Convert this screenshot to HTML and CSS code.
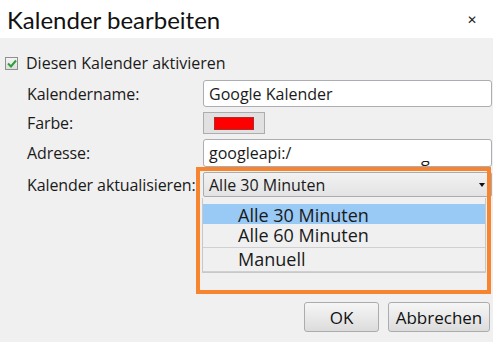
FILE: index.html
```html
<!DOCTYPE html>
<html lang="de">
<head>
    <meta charset="UTF-8">
    <title>Kalender bearbeiten</title>
    <link rel="stylesheet" href="styles.css">
</head>
<body>
    <div class="dialog">
        <div class="titlebar">
            <span class="title">Kalender bearbeiten</span>
            <span class="close">&#x2715;</span>
        </div>

        <div class="content">
            <label class="enable">
                <span class="checkbox">
                    <svg width="10" height="9" viewBox="0 0 10 9"><path d="M1 4.5 L4 7.5 L9 1.5" fill="none" stroke="#2e9e3a" stroke-width="2"/></svg>
                </span>
                Diesen Kalender aktivieren
            </label>

            <div class="form">
                <span class="label">Kalendername:</span>
                <div class="field text">Google Kalender</div>

                <span class="label">Farbe:</span>
                <div class="field"><span class="color-btn"><span class="swatch"></span></span></div>

                <span class="label">Adresse:</span>
                <div class="field text address">googleapi:/<span class="clipped"><span>g</span></span></div>

                <span class="label">Kalender aktualisieren:</span>
                <div class="field select-wrap">
                    <div class="select">
                        <span>Alle 30 Minuten</span>
                        <span class="arrow"></span>
                    </div>
                    <!-- open dropdown list -->
                    <ul class="options">
                        <li class="selected">Alle 30 Minuten</li>
                        <li>Alle 60 Minuten</li>
                        <li>Manuell</li>
                    </ul>
                </div>
            </div>

            <div class="highlight"></div>

            <div class="buttons">
                <button class="btn ok">OK</button>
                <button class="btn cancel">Abbrechen</button>
            </div>
        </div>
    </div>
</body>
</html>
```

FILE: styles.css
```css
/* General */
body {
    margin: 0;
    font-family: "Open Sans", "Noto Sans", sans-serif;
    color: #1a1a1a;
    background: #f0f0f0;
}

.dialog {
    width: 493px;
    height: 342px;
    background: #f0f0f0;
    position: relative;
    overflow: hidden;
}

/* Title bar */
.titlebar {
    height: 38px;
    background: #fff;
    display: flex;
    align-items: center;
    justify-content: space-between;
    padding: 0 16px 0 7px;
}

.title {
    font-family: "Lato", "Open Sans", sans-serif;
    font-size: 24px;
    color: #111;
}

.close {
    font-size: 12px;
    color: #222;
}

/* Content */
.content {
    padding: 17px 0 0 0;
}

.enable {
    display: flex;
    align-items: center;
    gap: 8px;
    padding-left: 5px;
    font-size: 16px;
    height: 16px;
}

.checkbox {
    width: 11px;
    height: 11px;
    border: 1px solid #8f8f8f;
    background: linear-gradient(#f4f4f4, #dedede);
    display: flex;
    align-items: center;
    justify-content: center;
}

.form {
    display: grid;
    grid-template-columns: 176px 289px;
    grid-template-rows: 27px 22px 28px 25px;
    row-gap: 5px;
    padding-left: 27px;
    margin-top: 9px;
    font-size: 16px;
}

.label {
    align-self: center;
    white-space: nowrap;
    letter-spacing: -0.1px;
}

.field.text {
    background: #fff;
    border: 1px solid #abadb3;
    border-radius: 3px;
    padding: 0 5px;
    display: flex;
    align-items: center;
    font-size: 16px;
    overflow: hidden;
}

.address {
    position: relative;
}

/* only the tail of a hidden glyph shows in the reference */
.address .clipped {
    position: absolute;
    left: 217px;
    top: 21px;
    height: 6px;
    overflow: hidden;
    line-height: 20px;
}

.address .clipped span {
    display: block;
    margin-top: -15px;
}

.color-btn {
    display: flex;
    align-items: center;
    justify-content: center;
    width: 60px;
    height: 20px;
    border: 1px solid #adadad;
    background: #e1e1e1;
}

.swatch {
    width: 38px;
    height: 11px;
    background: #ff0000;
    border: 1px solid #b22a2a;
}

/* Select + open list */
.select-wrap {
    position: relative;
}

.select {
    height: 23px;
    border: 1px solid #acacac;
    border-radius: 2px;
    background: linear-gradient(#f2f2f2, #e3e3e3);
    display: flex;
    align-items: center;
    justify-content: space-between;
    padding: 0 6px 0 5px;
    font-size: 16px;
}

.arrow {
    width: 0;
    height: 0;
    border-left: 3px solid transparent;
    border-right: 3px solid transparent;
    border-top: 4px solid #111;
}

.options {
    position: absolute;
    top: 26px;
    left: -1px;
    width: 282px;
    margin: 0;
    padding: 6px 0 0 0;
    list-style: none;
    background: #f0f0f0;
    border: 1px solid #c8c8c8;
    border-top: none;
    font-size: 18px;
    z-index: 2;
}

.options li {
    height: 23px;
    line-height: 23px;
    padding-left: 35px;
    border-bottom: 1px solid #d0d0d0;
}

.options li.selected {
    background: #99c9f5;
    border-bottom: none;
    height: 20px;
    line-height: 22px;
}

/* Orange annotation frame */
.highlight {
    position: absolute;
    left: 196px;
    top: 167px;
    width: 287px;
    height: 119px;
    border: 4px solid #f7852f;
    z-index: 3;
}

/* Buttons */
.buttons {
    display: flex;
    justify-content: flex-end;
    gap: 9px;
    padding-right: 3px;
    margin-top: 105px;
}

.btn {
    height: 30px;
    font-family: inherit;
    font-size: 17px;
    color: #111;
    border: 1px solid #acacac;
    border-radius: 3px;
    background: linear-gradient(#f6f6f6, #dcdcdc);
    padding: 0;
}

.btn.ok {
    width: 75px;
}

.btn.cancel {
    width: 102px;
}
```
